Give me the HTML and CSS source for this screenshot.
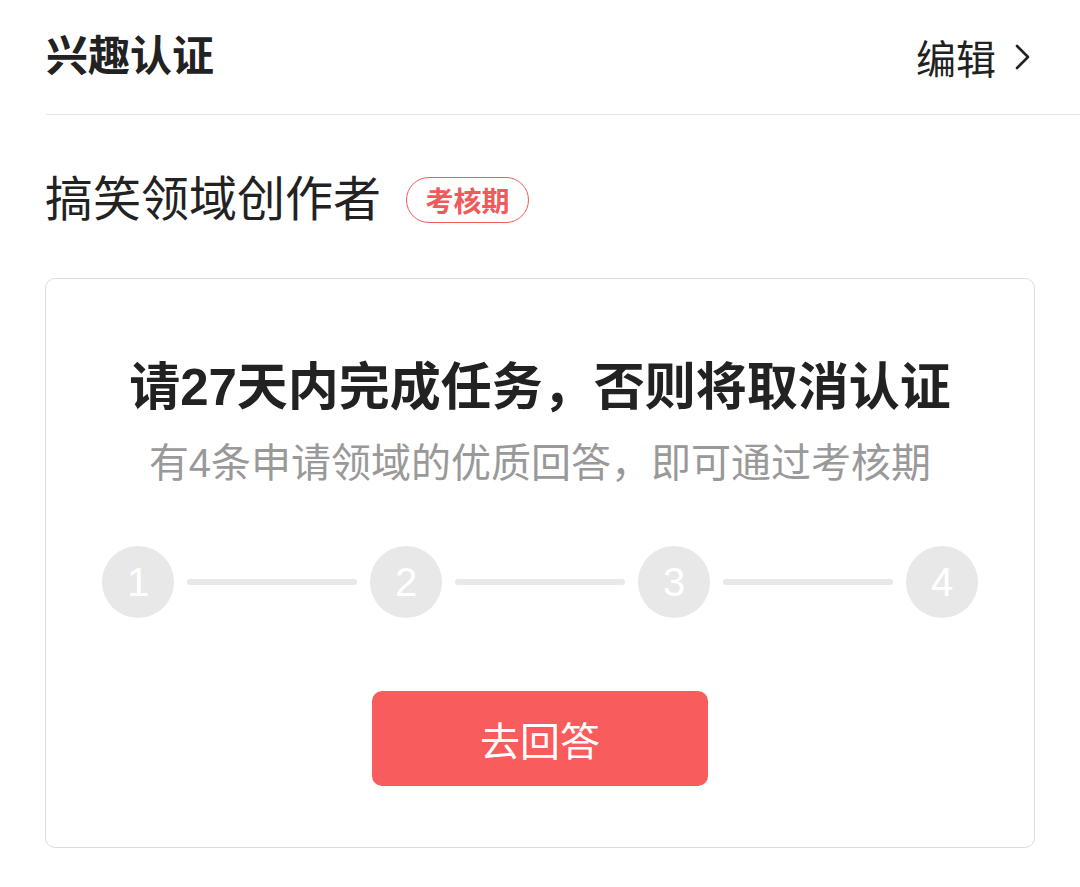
FILE: index.html
```html
<!DOCTYPE html>
<html>

<head>
    <title>兴趣认证</title>
    <link rel="stylesheet" href="styles.css">
</head>

<body>
    <!-- Header -->
    <header class="top-bar">
        <h1 class="top-title">兴趣认证</h1>
        <a class="edit-link" href="#">
            <span>编辑</span>
            <svg class="chevron" width="18" height="28" viewBox="0 0 18 28">
                <polyline points="3,3 14,14 3,25" fill="none" stroke="#222" stroke-width="2.6" stroke-linecap="round" stroke-linejoin="round"/>
            </svg>
        </a>
    </header>

    <div class="page">
        <!-- Field row -->
        <div class="field-row">
            <span class="field-name">搞笑领域创作者</span>
            <span class="badge">考核期</span>
        </div>

        <!-- Task card -->
        <div class="task-card">
            <h2 class="task-title">请27天内完成任务，否则将取消认证</h2>
            <p class="task-desc">有4条申请领域的优质回答，即可通过考核期</p>

            <div class="steps">
                <div class="step">1</div>
                <div class="step-line"></div>
                <div class="step">2</div>
                <div class="step-line"></div>
                <div class="step">3</div>
                <div class="step-line"></div>
                <div class="step">4</div>
            </div>

            <button class="answer-button">去回答</button>
        </div>
    </div>
</body>

</html>
```

FILE: styles.css
```css
/* General page styles */
body {
    margin: 0;
    background-color: #fff;
    color: #222;
    font-family: "Liberation Sans", "Noto Sans CJK SC", sans-serif;
}

/* Header styles */
.top-bar {
    display: flex;
    align-items: center;
    justify-content: space-between;
    height: 114px;
    margin-left: 46px;
    padding-right: 48px;
    border-bottom: 1px solid #e8e8e8;
}

.top-title {
    margin: 0;
    font-size: 42px;
    font-weight: bold;
    line-height: 1;
}

.edit-link {
    display: flex;
    align-items: center;
    gap: 18px;
    color: #222;
    text-decoration: none;
    font-size: 40px;
}

.chevron {
    display: block;
}

/* Main content */
.page {
    padding: 0 45px;
}

.field-row {
    display: flex;
    align-items: center;
    height: 46px;
    margin-top: 62px;
}

.field-name {
    font-size: 48px;
    line-height: 1;
}

.badge {
    display: inline-flex;
    align-items: center;
    justify-content: center;
    width: 121px;
    height: 44px;
    margin-left: 25px;
    border: 1px solid #f05a5a;
    border-radius: 23px;
    color: #f05a5a;
    font-size: 28px;
    font-weight: bold;
}

/* Task card styles */
.task-card {
    margin-top: 55px;
    padding: 79px 56px 61px;
    border: 1px solid #dcdcdc;
    border-radius: 10px;
    text-align: center;
}

.task-title {
    margin: 0;
    font-size: 51px;
    font-weight: bold;
    line-height: 60px;
}

.task-desc {
    margin: 20px 0 0;
    color: #999;
    font-size: 40px;
    line-height: 50px;
}

/* Progress steps */
.steps {
    display: flex;
    align-items: center;
    margin-top: 58px;
}

.step {
    display: flex;
    align-items: center;
    justify-content: center;
    width: 72px;
    height: 72px;
    border-radius: 50%;
    background-color: #e8e8e8;
    color: #fff;
    font-size: 40px;
}

.step-line {
    flex: 1;
    height: 6px;
    margin: 0 13px;
    border-radius: 3px;
    background-color: #e8e8e8;
}

/* Answer button */
.answer-button {
    width: 336px;
    height: 95px;
    margin-top: 73px;
    border: none;
    border-radius: 10px;
    background-color: #f85c5c;
    color: #fff;
    font-family: inherit;
    font-size: 40px;
    cursor: pointer;
}
```
